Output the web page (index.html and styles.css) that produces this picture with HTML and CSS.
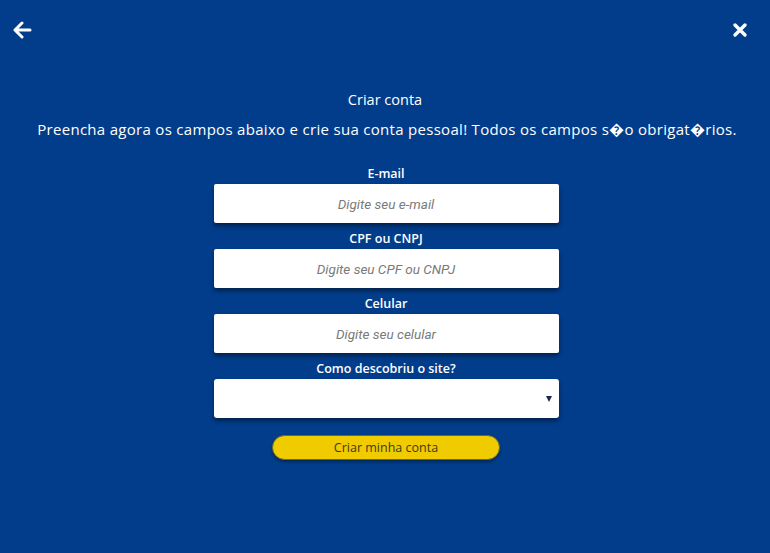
FILE: index.html
```html
<!DOCTYPE html>
<html lang="pt-BR">
<head>
    <meta charset="UTF-8">
    <meta name="viewport" content="width=device-width, initial-scale=1.0">
    <title>Criar conta</title>
    <link rel="stylesheet" href="styles.css">
</head>
<body>
    <div class="topbar">
        <a class="icon-btn" href="#">
            <svg width="20" height="18" viewBox="0 0 20 18">
                <path d="M18 9H3M10 2L3 9l7 7" fill="none" stroke="#fff" stroke-width="3" stroke-linecap="round" stroke-linejoin="round"/>
            </svg>
        </a>
        <a class="icon-btn" href="#">
            <svg width="16" height="16" viewBox="0 0 16 16">
                <path d="M3 3l10 10M13 3L3 13" fill="none" stroke="#fff" stroke-width="3.4" stroke-linecap="round"/>
            </svg>
        </a>
    </div>

    <div class="container">
        <h1>Criar conta</h1>
        <p class="subtitle">Preencha agora os campos abaixo e crie sua conta pessoal! Todos os campos s&#xFFFD;o obrigat&#xFFFD;rios.</p>

        <form class="signup">
            <label for="email">E-mail</label>
            <input type="text" id="email" placeholder="Digite seu e-mail">

            <label for="doc">CPF ou CNPJ</label>
            <input type="text" id="doc" placeholder="Digite seu CPF ou CNPJ">

            <label for="phone">Celular</label>
            <input type="text" id="phone" placeholder="Digite seu celular">

            <label for="origem">Como descobriu o site?</label>
            <div class="select-wrap">
                <select id="origem">
                    <option></option>
                </select>
            </div>

            <button type="button">Criar minha conta</button>
        </form>
    </div>
</body>
</html>
```

FILE: styles.css
```css
body {
    font-family: "Open Sans", "Liberation Sans", sans-serif;
    background-color: #023d8b;
    color: #fff;
    margin: 0;
    height: 100vh;
}
.topbar {
    display: flex;
    justify-content: space-between;
    padding: 19px 22px 0 12px;
    height: 21px;
}
.icon-btn {
    display: flex;
    align-items: center;
}
.container {
    text-align: center;
    padding-top: 50px;
}
h1 {
    font-size: 14.5px;
    font-weight: 400;
    margin: 0;
    line-height: 20px;
}
.subtitle {
    font-size: 15px;
    margin: 9px 0 0 4px;
    line-height: 20px;
    letter-spacing: 0.3px;
}
.signup {
    width: 345px;
    margin: 27px auto 0;
    padding-left: 2px;
    display: flex;
    flex-direction: column;
}
label {
    font-size: 12.5px;
    font-weight: 600;
    line-height: 16px;
    margin-bottom: 2px;
}
input, select {
    box-sizing: border-box;
    width: 100%;
    height: 39px;
    border: none;
    border-radius: 2px;
    background-color: #fff;
    box-shadow: 0 3px 4px rgba(0, 0, 0, 0.45);
    margin-bottom: 8px;
    font-family: Roboto, sans-serif;
    font-size: 13.5px;
    text-align: center;
    outline: none;
}
input::placeholder {
    color: #7a7a7a;
    font-style: italic;
}
.select-wrap {
    position: relative;
}
select {
    appearance: none;
    -webkit-appearance: none;
    border-radius: 3px;
}
.select-wrap::after {
    content: "";
    position: absolute;
    right: 7px;
    top: 17px;
    border-left: 3px solid transparent;
    border-right: 3px solid transparent;
    border-top: 6px solid #1b2a4a;
}
button {
    align-self: center;
    width: 228px;
    height: 25px;
    margin-top: 9px;
    background-color: #f0cb00;
    border: 1px solid #6b6a2a;
    border-radius: 13px;
    color: #3d3a1a;
    font-family: "Open Sans", sans-serif;
    font-size: 12.5px;
    cursor: pointer;
    box-shadow: 0 2px 3px rgba(0, 0, 0, 0.35);
}
```
